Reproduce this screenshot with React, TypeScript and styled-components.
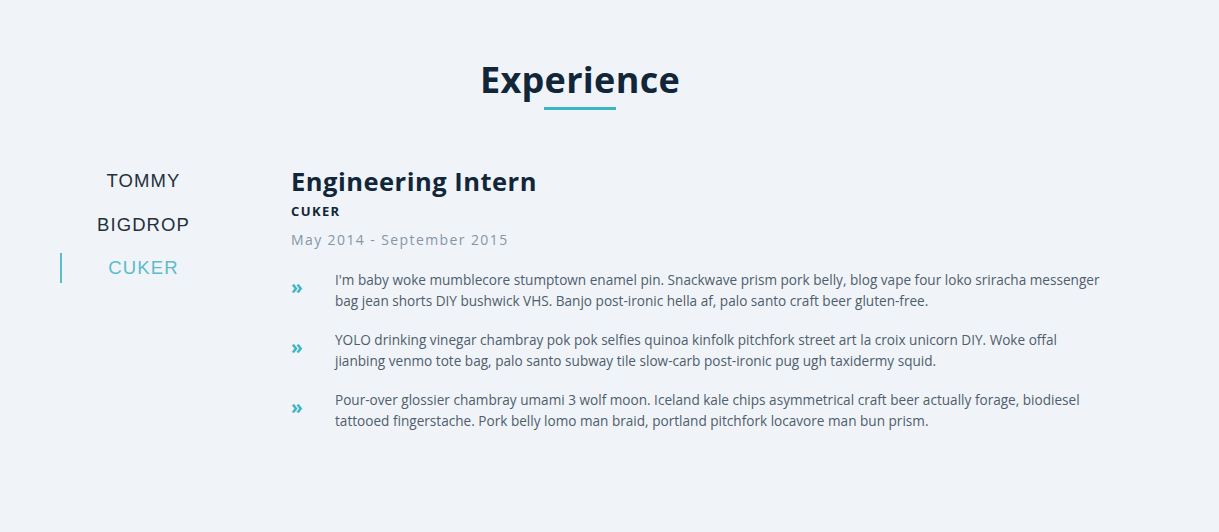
import styled, { createGlobalStyle } from "styled-components";

const GlobalStyle = createGlobalStyle`
  body {
    margin: 0;
    background-color: #f0f4f8;
    font-family: "Open Sans", "Noto Sans", sans-serif;
  }
`;

const Section = styled.section`
  box-sizing: border-box;
  width: 1219px;
  height: 532px;
  padding: 56px 119px 0 60px;
`;
const TitleWrap = styled.div`
  display: flex;
  flex-direction: column;
  align-items: center;
  margin-bottom: 52px;
`;
const Title = styled.h2`
  margin: 0;
  font-size: 36px;
  font-weight: 700;
  color: #12263a;
  line-height: 48px;
  letter-spacing: 0.3px;
`;
const Underline = styled.div`
  width: 72px;
  height: 3px;
  margin-top: 3px;
  background-color: #3bb4c4;
`;
const Body = styled.div`
  display: flex;
  gap: 63px;
`;
const Tabs = styled.ul`
  list-style: none;
  margin: 4px 0 0;
  padding: 0;
  width: 168px;
  display: flex;
  flex-direction: column;
  gap: 13.5px;
`;
const Tab = styled.li<{ $active?: boolean }>`
  height: 30px;
  display: flex;
  align-items: center;
  justify-content: center;
  padding-right: 3px;
  font-family: "Liberation Sans", Arial, sans-serif;
  font-size: 18.5px;
  letter-spacing: 1.1px;
  color: ${(p) => (p.$active ? "#5bbccb" : "#25303b")};
  border-left: 2px solid ${(p) => (p.$active ? "#5bbccb" : "transparent")};
`;
const Panel = styled.div`
  flex: 1;
  padding-top: 2px;
`;
const JobTitle = styled.h3`
  margin: 0;
  font-size: 25.5px;
  font-weight: 700;
  color: #12263a;
  line-height: 34px;
  letter-spacing: 0.5px;
`;
const Company = styled.div`
  font-size: 13px;
  font-weight: 700;
  letter-spacing: 1.4px;
  color: #12263a;
  margin-top: 4px;
`;
const Dates = styled.div`
  font-size: 14px;
  letter-spacing: 1.4px;
  color: #8795a6;
  margin-top: 10px;
  margin-bottom: 20px;
`;
const List = styled.ul`
  list-style: none;
  margin: 0;
  padding: 0;
  display: flex;
  flex-direction: column;
  gap: 18px;
`;
const Item = styled.li`
  display: flex;
  align-items: center;
`;
const Arrow = styled.span`
  width: 44px;
  flex-shrink: 0;
  margin-top: -5px;
  color: #3bb4c4;
  font-size: 19px;
  font-weight: 700;
  line-height: 1;
`;
const Text = styled.p`
  margin: 0;
  font-size: 13.6px;
  line-height: 21px;
  color: #4f5d6c;
  max-width: 780px;
`;

const points = [
  "I'm baby woke mumblecore stumptown enamel pin. Snackwave prism pork belly, blog vape four loko sriracha messenger bag jean shorts DIY bushwick VHS. Banjo post-ironic hella af, palo santo craft beer gluten-free.",
  "YOLO drinking vinegar chambray pok pok selfies quinoa kinfolk pitchfork street art la croix unicorn DIY. Woke offal jianbing venmo tote bag, palo santo subway tile slow-carb post-ironic pug ugh taxidermy squid.",
  "Pour-over glossier chambray umami 3 wolf moon. Iceland kale chips asymmetrical craft beer actually forage, biodiesel tattooed fingerstache. Pork belly lomo man braid, portland pitchfork locavore man bun prism.",
];

const App = () => {
  return (
    <>
      <GlobalStyle />
      <Section>
        <TitleWrap>
          <Title>Experience</Title>
          <Underline />
        </TitleWrap>
        <Body>
          <Tabs>
            <Tab>TOMMY</Tab>
            <Tab>BIGDROP</Tab>
            <Tab $active>CUKER</Tab>
          </Tabs>
          <Panel>
            <JobTitle>Engineering Intern</JobTitle>
            <Company>CUKER</Company>
            <Dates>May 2014 - September 2015</Dates>
            <List>
              {points.map((p) => (
                <Item key={p}>
                  <Arrow>»</Arrow>
                  <Text>{p}</Text>
                </Item>
              ))}
            </List>
          </Panel>
        </Body>
      </Section>
    </>
  );
};

export default App;
